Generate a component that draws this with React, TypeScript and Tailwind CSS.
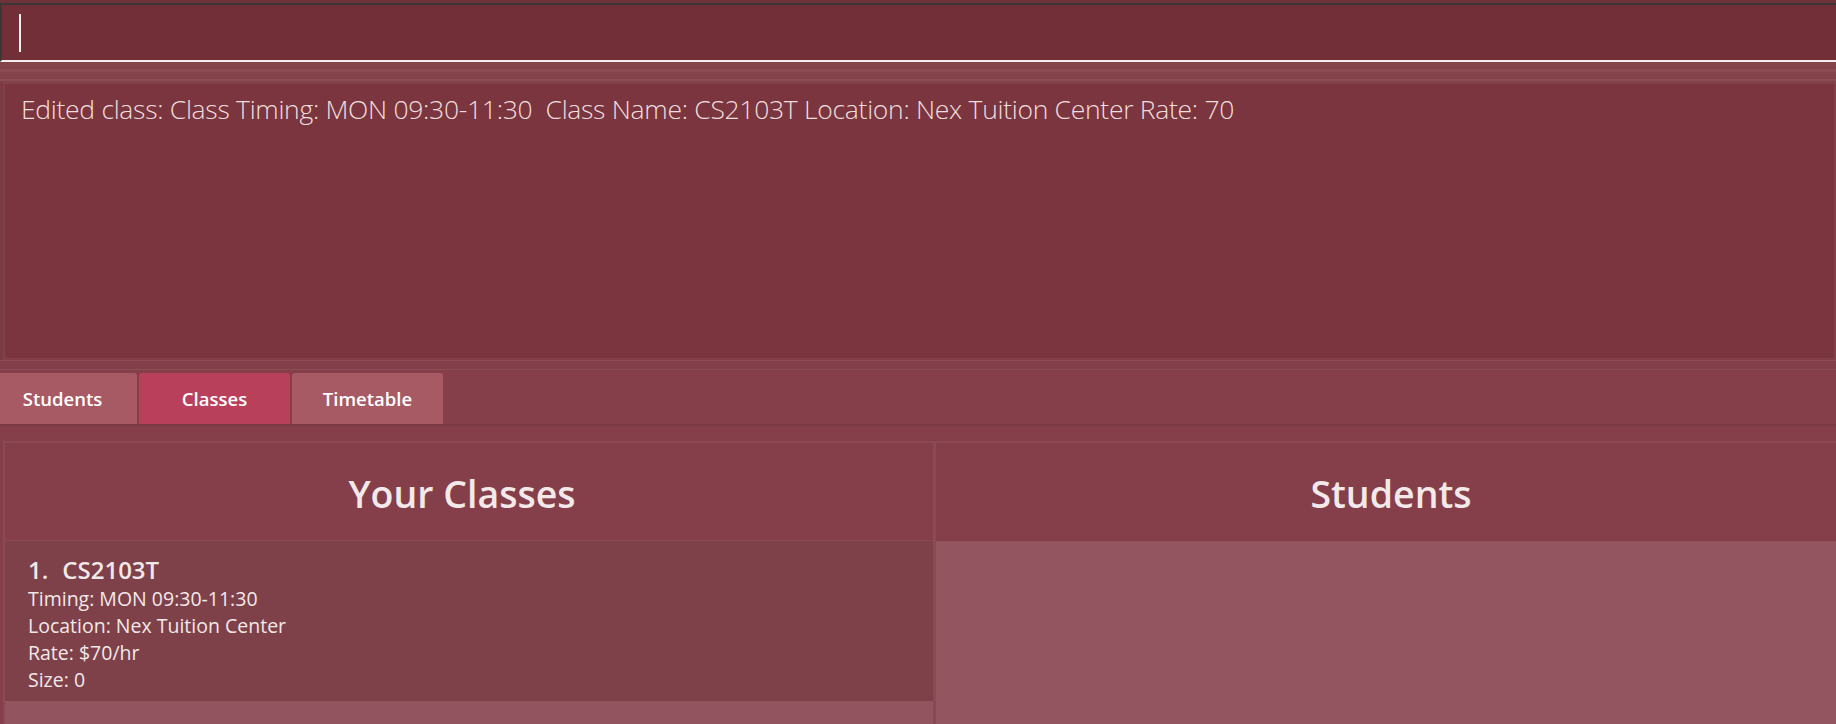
import React from "react";

const font = { fontFamily: '"Open Sans", "Noto Sans", sans-serif' };

export default function App() {
  return (
    <div
      className="w-[1836px] h-[724px] overflow-hidden flex flex-col bg-[#843f4a] text-white"
      style={font}
    >
      {/* command box */}
      <div className="pt-[3px] bg-[#6f323a]">
        <div className="h-[59px] bg-[#722f38] border-t-2 border-l-2 border-[#3d3636] border-b-2 border-b-[#f4eeee] flex items-center pl-[17px]">
          <div className="w-[2px] h-[38px] bg-[#f5f0f0]" />
        </div>
      </div>
      {/* spacer band */}
      <div className="h-[20px] bg-[#84424b] flex flex-col">
        <div className="h-[7px]" />
        <div className="h-[3px] bg-[#8a4b53]" />
        <div className="h-[7px]" />
        <div className="h-[2px] bg-[#8a4b53]" />
      </div>
      {/* result box */}
      <div className="h-[278px] bg-[#7c3a43] pl-[3px]">
        <div className="h-full bg-[#7a353f] border-2 border-[#834049] pl-[16px] pt-[6px]">
          <div
            className="text-[26.5px] text-[#f0dede] tracking-[-0.3px] whitespace-pre"
            style={{ fontFamily: '"Open Sans", sans-serif', fontWeight: 300 }}
          >
            Edited class: Class Timing: MON 09:30-11:30  Class Name: CS2103T Location: Nex Tuition Center Rate: 70
          </div>
        </div>
      </div>
      {/* gap */}
      <div className="h-[10px] bg-[#83404a] border-t border-[#8c4d55] border-b border-b-[#8c4d55]" />
      {/* tab bar */}
      <div className="h-[56px] bg-[#843f4a] border-b-2 border-[#7b3a44] pt-[3px] flex items-stretch">
        <div className="w-[137px] bg-[#a85a64] rounded-tr-[3px] flex items-center justify-center text-[18.5px] font-semibold pt-[1px] pr-[12px]">
          Students
        </div>
        <div className="w-[151px] ml-[2px] bg-[#b8405a] rounded-t-[3px] flex items-center justify-center text-[18.5px] font-semibold pt-[1px]">
          Classes
        </div>
        <div className="w-[151px] ml-[2px] bg-[#a85a64] rounded-t-[3px] flex items-center justify-center text-[18.5px] font-semibold pt-[1px]">
          Timetable
        </div>
      </div>
      {/* panels */}
      <div className="flex-1 bg-[#843f4a] pt-[15px] pl-[3px] flex min-h-0">
        <div className="w-[930px] flex flex-col border-t-2 border-l-2 border-[#8b4a53] bg-[#843f4a]">
          <div className="h-[98px] flex items-center justify-center border-b border-[#8b4a53] pt-[5px] pr-[14px]">
            <span className="text-[37.5px] font-semibold text-[#f3e9e9]">Your Classes</span>
          </div>
          <div className="h-[160px] bg-[#7e4049] pl-[23px] pt-[14px] flex flex-col">
            <div className="text-[24px] font-semibold text-[#f2e8e8] leading-[30px] flex">
              <span>1.</span>
              <span className="ml-[14px]">CS2103T</span>
            </div>
            <div className="text-[19.5px] text-[#f2e8e8] leading-[27px]">Timing: MON 09:30-11:30</div>
            <div className="text-[19.5px] text-[#f2e8e8] leading-[27px]">Location: Nex Tuition Center</div>
            <div className="text-[19.5px] text-[#f2e8e8] leading-[27px]">Rate: $70/hr</div>
            <div className="text-[19.5px] text-[#f2e8e8] leading-[27px]">Size: 0</div>
          </div>
          <div className="flex-1 bg-[#925560]" />
        </div>
        <div className="w-[3px] bg-[#8b4a53]" />
        <div className="flex-1 flex flex-col border-t-2 border-[#8b4a53]">
          <div className="h-[98px] flex items-center justify-center pt-[5px] pl-[10px]">
            <span className="text-[37.5px] font-semibold text-[#f3e9e9]">Students</span>
          </div>
          <div className="flex-1 bg-[#935660]" />
        </div>
      </div>
    </div>
  );
}
